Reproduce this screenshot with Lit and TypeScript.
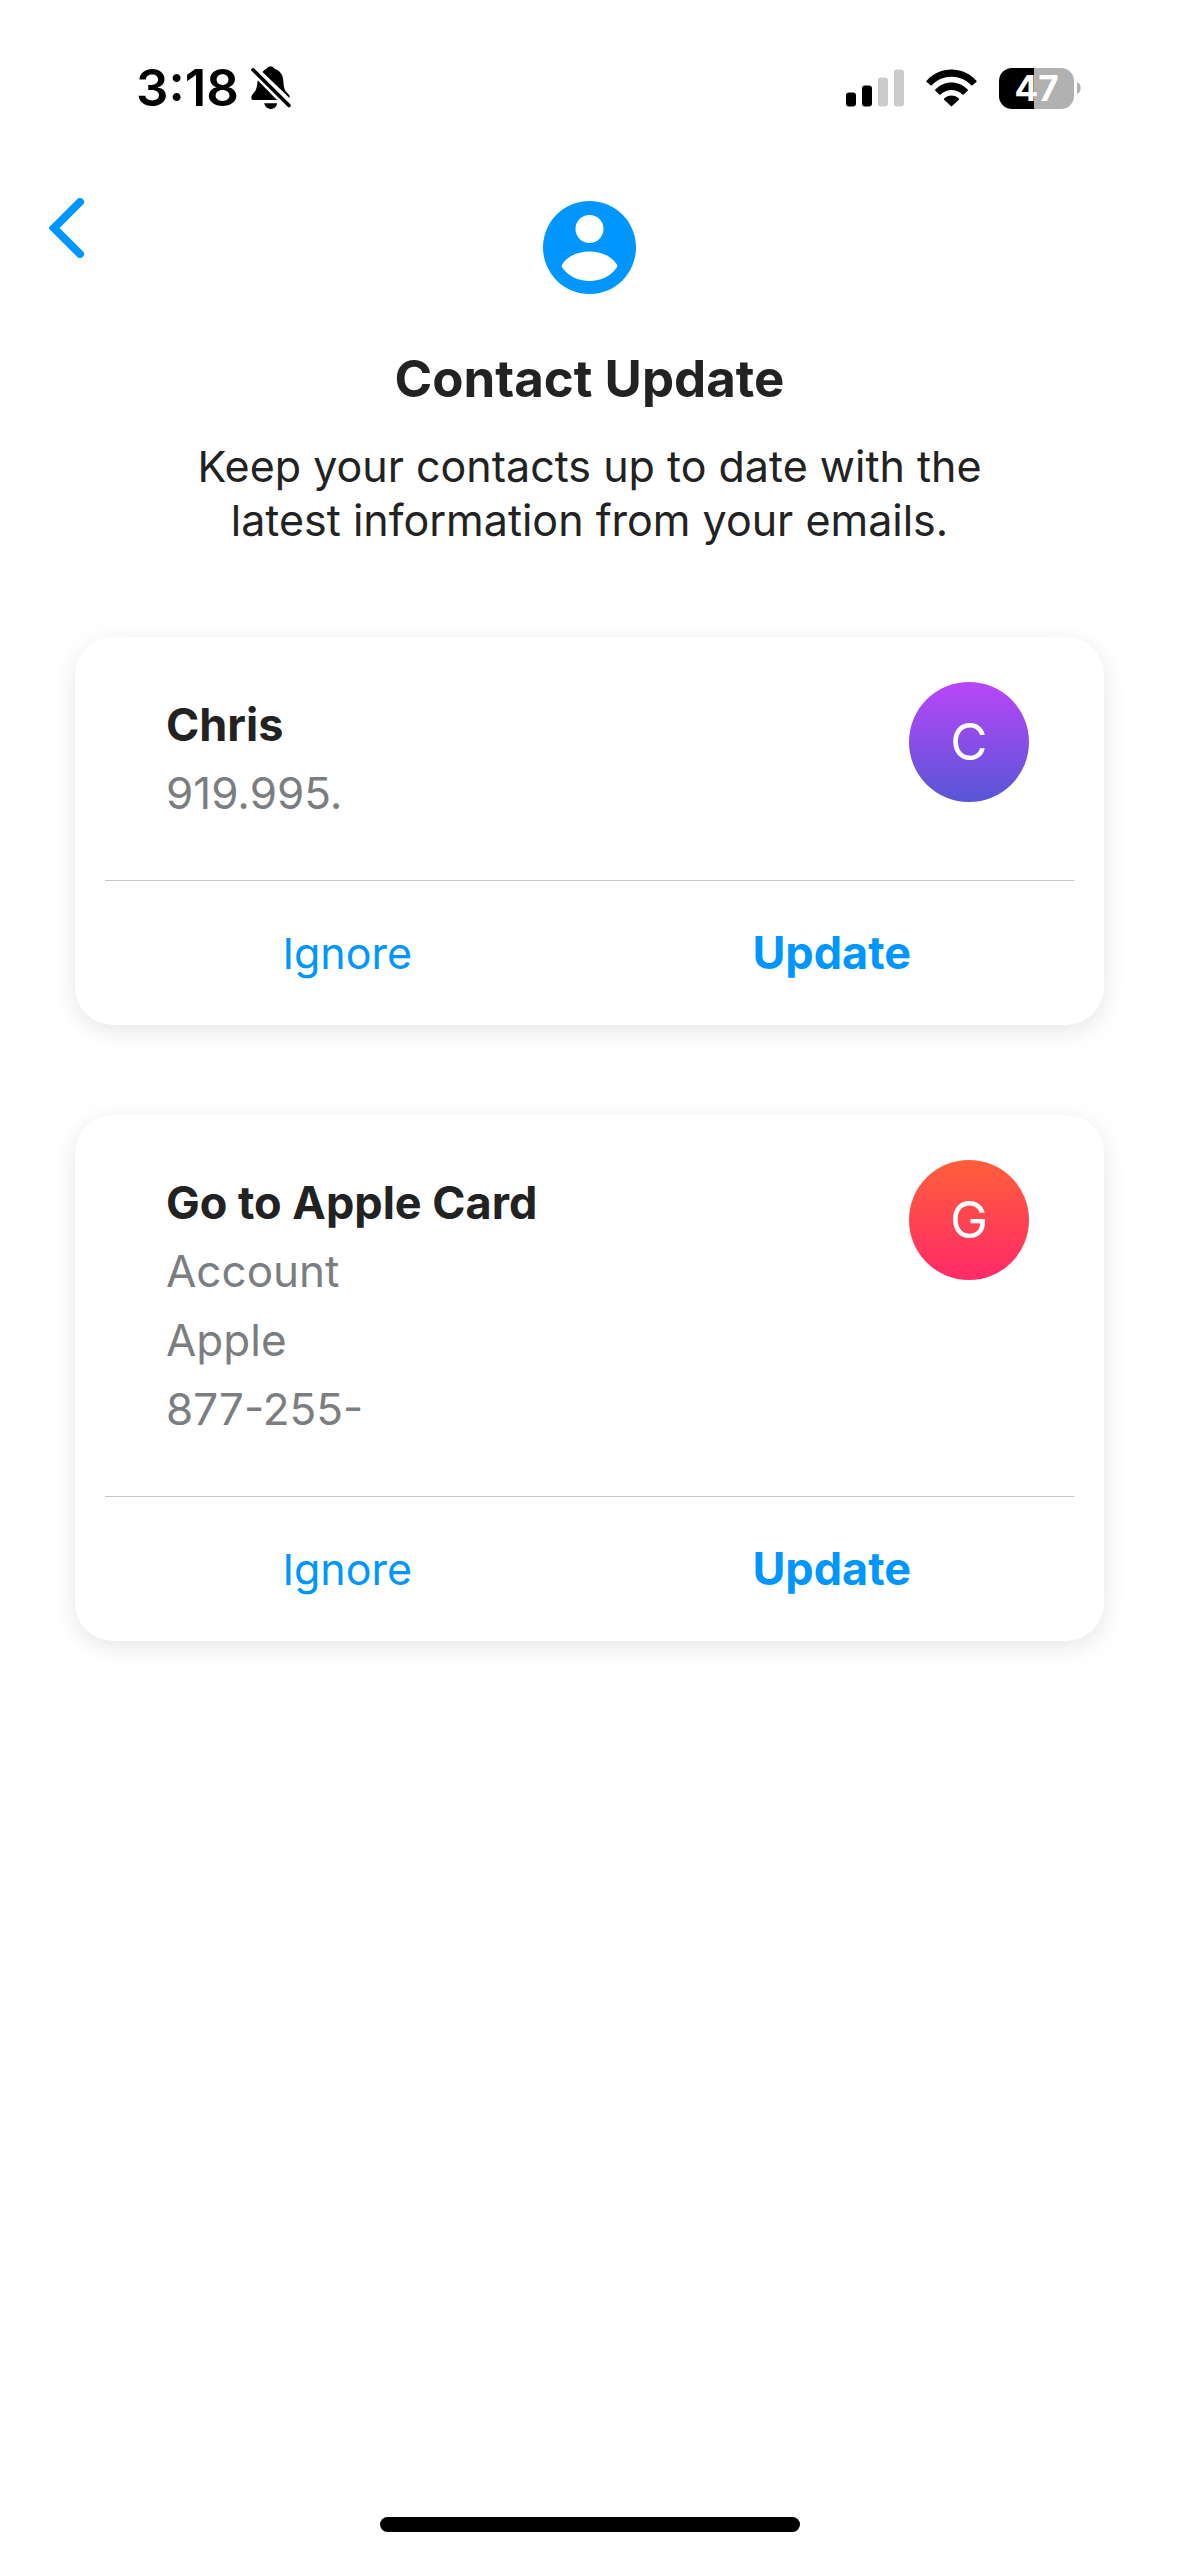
import { LitElement, html, css } from "lit";
import { customElement, property } from "lit/decorators.js";

interface Contact {
  name: string;
  details: string[];
  tone: "violet" | "coral";
}

const contacts: Contact[] = [
  { name: "Chris", details: ["919.995."], tone: "violet" },
  { name: "Go to Apple Card", details: ["Account", "Apple", "877-255-"], tone: "coral" },
];

@customElement("status-bar")
class StatusBar extends LitElement {
  static styles = css`
    :host {
      display: flex;
      justify-content: space-between;
      align-items: center;
      height: 60px;
      padding: 58px 98px 0 136px;
      color: #000;
    }
    .group {
      display: flex;
      align-items: center;
    }
    .time {
      font-size: 51px;
      line-height: 60px;
      font-weight: 600;
    }
    .bell {
      margin-left: 12px;
    }
    .system {
      gap: 22px;
    }
    .battery {
      display: flex;
      align-items: center;
      gap: 3px;
    }
    .level {
      display: flex;
      align-items: center;
      justify-content: center;
      width: 75px;
      height: 41px;
      border-radius: 13px;
      background: linear-gradient(90deg, #000 47%, #b1b1b1 47%);
      color: #fff;
      font-size: 35px;
      line-height: 41px;
      font-weight: 700;
    }
    svg {
      display: block;
    }
  `;

  render() {
    return html`
      <div class="group">
        <span class="time">3:18</span>
        <svg class="bell" width="40" height="44" viewBox="0 0 40 44" aria-hidden="true">
          <path d="M11.500 6 C13 4 14.800 3.200 15.800 2.500 C17 .7 18 .4 19.500 .4 C21.300 .4 22.500 1 23.500 2.700 C29 4.500 32 9 32.300 14.500 C32.500 19 33 22.500 34.500 25 L38.500 29.500 L38.500 32 Z" />
          <path d="M7 13.800 L27 34 H2.500 C.8 34 .2 32.800 .4 31 C.6 28.500 3.500 26.500 4.800 24 C6.300 21 6 17 7 13.800 Z" />
          <path d="M13.200 37.300 H26.300 C25.500 41 23 43 19.800 43 C16.500 43 14 41 13.200 37.300 Z" />
          <path d="M2 3.800 L38 40.500" stroke="#fff" stroke-width="8" />
          <path d="M2 3.800 L38 39.500" stroke="#000" stroke-width="3.600" stroke-linecap="round" />
        </svg>
      </div>
      <div class="group system">
        <svg width="58" height="38" viewBox="0 0 58 38" aria-hidden="true">
          <rect x="0" y="23.500" width="10" height="14" rx="3" />
          <rect x="16" y="16.500" width="10" height="21" rx="3" />
          <rect x="32" y="8.500" width="10" height="29" rx="3" fill="#cbcbcb" />
          <rect x="48" y="0.500" width="10" height="37" rx="3" fill="#cbcbcb" />
        </svg>
        <svg width="51" height="38" viewBox="0 0 51 38" aria-hidden="true">
          <path d="M.6 11.700 C14.200 -3.200 36.800 -3.200 50.400 11.700 Q51 12.300 50.400 12.900 L46.400 16.300 Q45.800 16.700 45.200 16.200 C34.400 5 16.600 5 5.800 16.200 Q5.200 16.700 4.600 16.300 L.6 12.900 Q0 12.300 .6 11.700 Z" />
          <path d="M9.300 20.600 C18.200 11.200 32.800 11.200 41.700 20.600 Q42.200 21.200 41.700 21.700 L37.700 25.500 Q37.100 26 36.500 25.500 C30.400 19.500 20.600 19.500 14.500 25.500 Q13.900 26 13.300 25.500 L9.300 21.700 Q8.800 21.200 9.300 20.600 Z" />
          <path d="M18.100 29.600 C22.200 25.600 28.800 25.600 32.900 29.600 Q33.400 30.100 32.900 30.700 L26.100 37 Q25.500 37.500 24.900 37 L18.100 30.700 Q17.600 30.100 18.100 29.600 Z" />
        </svg>
        <div class="battery">
          <span class="level">47</span>
          <svg width="4" height="12" viewBox="0 0 4 12" aria-hidden="true">
            <path d="M0 0 C5 2 5 10 0 12 Z" fill="#b1b1b1" />
          </svg>
        </div>
      </div>
    `;
  }
}

@customElement("contact-card")
class ContactCard extends LitElement {
  @property({ attribute: false }) contact!: Contact;

  static styles = css`
    :host {
      display: block;
      padding: 0 30px;
      border-radius: 38px;
      background: #fff;
      box-shadow: 0 6px 24px rgba(0, 0, 0, 0.1);
    }
    .summary {
      display: flex;
      justify-content: space-between;
      align-items: flex-start;
      padding: 45px 45px 52px 61px;
      border-bottom: 1px solid #c4c6c8;
    }
    .text {
      padding-top: 8px;
      line-height: 69px;
    }
    .name,
    .detail {
      margin: 0;
    }
    .name {
      color: #222;
      font-size: 45px;
      font-weight: 700;
    }
    .detail {
      color: #7b7e81;
      font-size: 44px;
    }
    .avatar {
      width: 120px;
      border-radius: 50%;
      color: #fff;
      font-size: 51px;
      line-height: 120px;
      font-weight: 400;
      text-align: center;
    }
    .violet {
      background: linear-gradient(#b946f8, #5856d6);
    }
    .coral {
      background: linear-gradient(#ff5e3a, #ff2a68);
    }
    .actions {
      display: grid;
      grid-template-columns: 1fr 1fr;
    }
    .action {
      height: 144px;
      padding: 0;
      border: 0;
      background: none;
      color: #0096ff;
      font-family: inherit;
      font-size: 43px;
      line-height: 54px;
    }
    .primary {
      font-size: 45px;
      font-weight: 700;
    }
  `;

  render() {
    const { name, details, tone } = this.contact;
    return html`
      <div class="summary">
        <div class="text">
          <h2 class="name">${name}</h2>
          ${details.map((d) => html`<p class="detail">${d}</p>`)}
        </div>
        <span class="avatar ${tone}">${name[0]}</span>
      </div>
      <div class="actions">
        <button class="action" type="button">Ignore</button>
        <button class="action primary" type="button">Update</button>
      </div>
    `;
  }
}

@customElement("app-root")
class AppRoot extends LitElement {
  static styles = css`
    :host {
      display: flex;
      flex-direction: column;
      box-sizing: border-box;
      min-height: 100vh;
      padding-bottom: 24px;
      background: #fff;
      color: #222;
      font-family: Inter, "Liberation Sans", sans-serif;
    }
    .nav {
      display: grid;
      grid-template-columns: 1fr auto 1fr;
      align-items: start;
      padding: 80px 45px 0;
    }
    .back {
      justify-self: start;
      padding: 0 4px;
      border: 0;
      background: none;
    }
    .person {
      margin-top: 3px;
    }
    svg {
      display: block;
    }
    .intro {
      padding: 53px 150px 0;
      text-align: center;
    }
    .title {
      margin: 0;
      font-size: 51px;
      line-height: 64px;
      font-weight: 700;
    }
    .lead {
      max-width: 840px;
      margin: 28px auto 0;
      font-size: 43px;
      line-height: 54px;
      text-wrap: balance;
    }
    .cards {
      display: flex;
      flex-direction: column;
      gap: 90px;
      padding: 90px 75px;
    }
    .home {
      align-self: center;
      width: 420px;
      height: 15px;
      margin-top: auto;
      border-radius: 8px;
      background: #000;
    }
  `;

  render() {
    return html`
      <status-bar></status-bar>
      <nav class="nav">
        <button class="back" type="button" aria-label="Back">
          <svg width="36" height="60" viewBox="0 0 36 60" aria-hidden="true">
            <path d="M31 4 L5 30 L31 56" fill="none" stroke="#0096ff" stroke-width="8" stroke-linecap="round" />
          </svg>
        </button>
        <svg class="person" width="93" height="93" viewBox="0 0 93 93" aria-hidden="true">
          <circle cx="46.500" cy="46.500" r="46.500" fill="#0096ff" />
          <circle cx="46.500" cy="28" r="14" fill="#fff" />
          <path d="M19.200 66.500 Q18.200 64.700 19.400 63 C24 55.500 35 50.500 46.500 50.500 C58 50.500 69 55.500 73.600 63 Q74.800 64.700 73.800 66.500 C68 75 58 80 46.500 80 C35 80 25 75 19.200 66.500 Z" fill="#fff" />
        </svg>
      </nav>
      <header class="intro">
        <h1 class="title">Contact Update</h1>
        <p class="lead">Keep your contacts up to date with the latest information from your emails.</p>
      </header>
      <main class="cards">
        ${contacts.map((c) => html`<contact-card .contact=${c}></contact-card>`)}
      </main>
      <div class="home"></div>
    `;
  }
}
